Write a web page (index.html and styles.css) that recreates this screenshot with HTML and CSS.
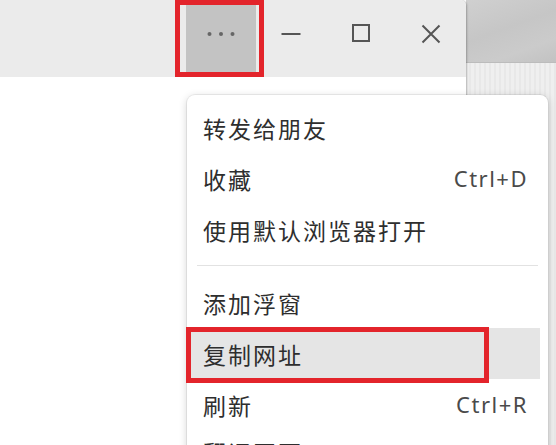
FILE: index.html
```html
<!DOCTYPE html>
<html lang="zh-CN">
<head>
<meta charset="utf-8">
<title>Menu</title>
<link rel="stylesheet" href="styles.css">
</head>
<body>
<div class="screen">
  <div class="window">
    <div class="titlebar">
      <div class="tb-btn hover">
        <svg width="30" height="20" viewBox="0 0 30 20"><circle cx="3.5" cy="10" r="2" fill="#666"/><circle cx="15" cy="10" r="2" fill="#666"/><circle cx="26.5" cy="10" r="2" fill="#666"/></svg>
      </div>
      <div class="tb-btn">
        <svg width="20" height="20" viewBox="0 0 20 20"><line x1="0.5" y1="10" x2="19.5" y2="10" stroke="#555" stroke-width="2"/></svg>
      </div>
      <div class="tb-btn">
        <svg width="20" height="20" viewBox="0 0 20 20"><rect x="2" y="1" width="16" height="16" fill="none" stroke="#555" stroke-width="2"/></svg>
      </div>
      <div class="tb-btn">
        <svg width="20" height="20" viewBox="0 0 20 20"><path d="M1.5 1.5 L18.5 18.5 M18.5 1.5 L1.5 18.5" stroke="#555" stroke-width="2" fill="none"/></svg>
      </div>
      <div class="mark mark-more"></div>
    </div>
    <div class="content"></div>
  </div>
  <div class="desktop">
    <div class="desk-top"></div>
    <div class="desk-bottom"></div>
  </div>
  <div class="menu">
    <div class="menu-list">
      <div class="item"><span class="label">转发给朋友</span></div>
      <div class="item"><span class="label">收藏</span><span class="key">Ctrl+D</span></div>
      <div class="item"><span class="label">使用默认浏览器打开</span></div>
      <div class="sep"></div>
      <div class="item"><span class="label">添加浮窗</span></div>
      <div class="item active"><span class="label">复制网址</span><div class="mark mark-item"></div></div>
      <div class="item"><span class="label">刷新</span><span class="key">Ctrl+R</span></div>
      <div class="item last"><span class="label">翻译网页</span></div>
    </div>
  </div>
</div>
</body>
</html>
```
FILE: styles.css
```css
html, body {
  margin: 0;
  padding: 0;
  background: #fff;
}
.screen {
  position: relative;
  display: flex;
  width: 556px;
  height: 445px;
  overflow: hidden;
  font-family: "Noto Sans CJK SC", "Noto Sans", sans-serif;
}
.window {
  width: 466px;
  flex: none;
  display: flex;
  flex-direction: column;
  box-shadow: 1px 0 2px rgba(0, 0, 0, 0.25);
  border-top-right-radius: 6px;
  position: relative;
  z-index: 1;
}
.titlebar {
  position: relative;
  height: 77px;
  background: #ebebeb;
  display: flex;
  justify-content: flex-end;
  align-items: flex-start;
  border-top-right-radius: 6px;
}
.tb-btn {
  width: 70px;
  height: 72px;
  box-sizing: border-box;
  padding-top: 24px;
  display: flex;
  justify-content: center;
  align-items: flex-start;
}
.tb-btn svg {
  display: block;
}
.tb-btn.hover {
  background: #c3c3c3;
}
.content {
  flex: 1;
  background: #fff;
}
.desktop {
  flex: 1;
  display: flex;
  flex-direction: column;
}
.desk-top {
  height: 62px;
  background: linear-gradient(160deg, #d0d0d0 0%, #c6c6c6 45%, #cbcbcb 75%, #c2c2c2 100%);
  border-bottom: 1px solid #bcbcbc;
}
.desk-bottom {
  flex: 1;
  background: repeating-linear-gradient(90deg, #efefef 0, #efefef 3px, #e8e8e8 3px, #e8e8e8 5px);
}
.mark {
  position: absolute;
  box-sizing: border-box;
  border: 5px solid #e3242b;
  pointer-events: none;
}
.mark-more {
  left: 175px;
  top: 0;
  width: 89px;
  height: 77px;
}
.menu {
  position: absolute;
  z-index: 2;
  left: 187px;
  top: 95px;
  width: 361px;
  height: 380px;
  box-sizing: border-box;
  padding-top: 7px;
  background: #fff;
  border-radius: 8px;
  box-shadow: 0 0 0 1px rgba(0, 0, 0, 0.06), 0 2px 8px rgba(0, 0, 0, 0.18);
}
.menu-list {
  width: 353px;
}
.item {
  position: relative;
  box-sizing: border-box;
  width: 353px;
  display: flex;
  justify-content: space-between;
  align-items: center;
  height: 51px;
  padding: 0 12px 0 16px;
  color: #2e2e2e;
}
.item.active {
  background: #e5e5e5;
}
.item.last {
  margin-top: -4px;
}
.label {
  font-size: 23px;
  letter-spacing: 2px;
  line-height: 51px;
  padding-top: 2px;
}
.key {
  font-family: "Noto Sans", sans-serif;
  font-size: 22px;
  letter-spacing: 1.5px;
  color: #4a4a4a;
  line-height: 51px;
}
.sep {
  height: 1px;
  background: #e2e2e2;
  margin: 10px 2px 11px 10px;
}
.mark-item {
  left: -1px;
  top: -1px;
  width: 303px;
  height: 56px;
}
```
